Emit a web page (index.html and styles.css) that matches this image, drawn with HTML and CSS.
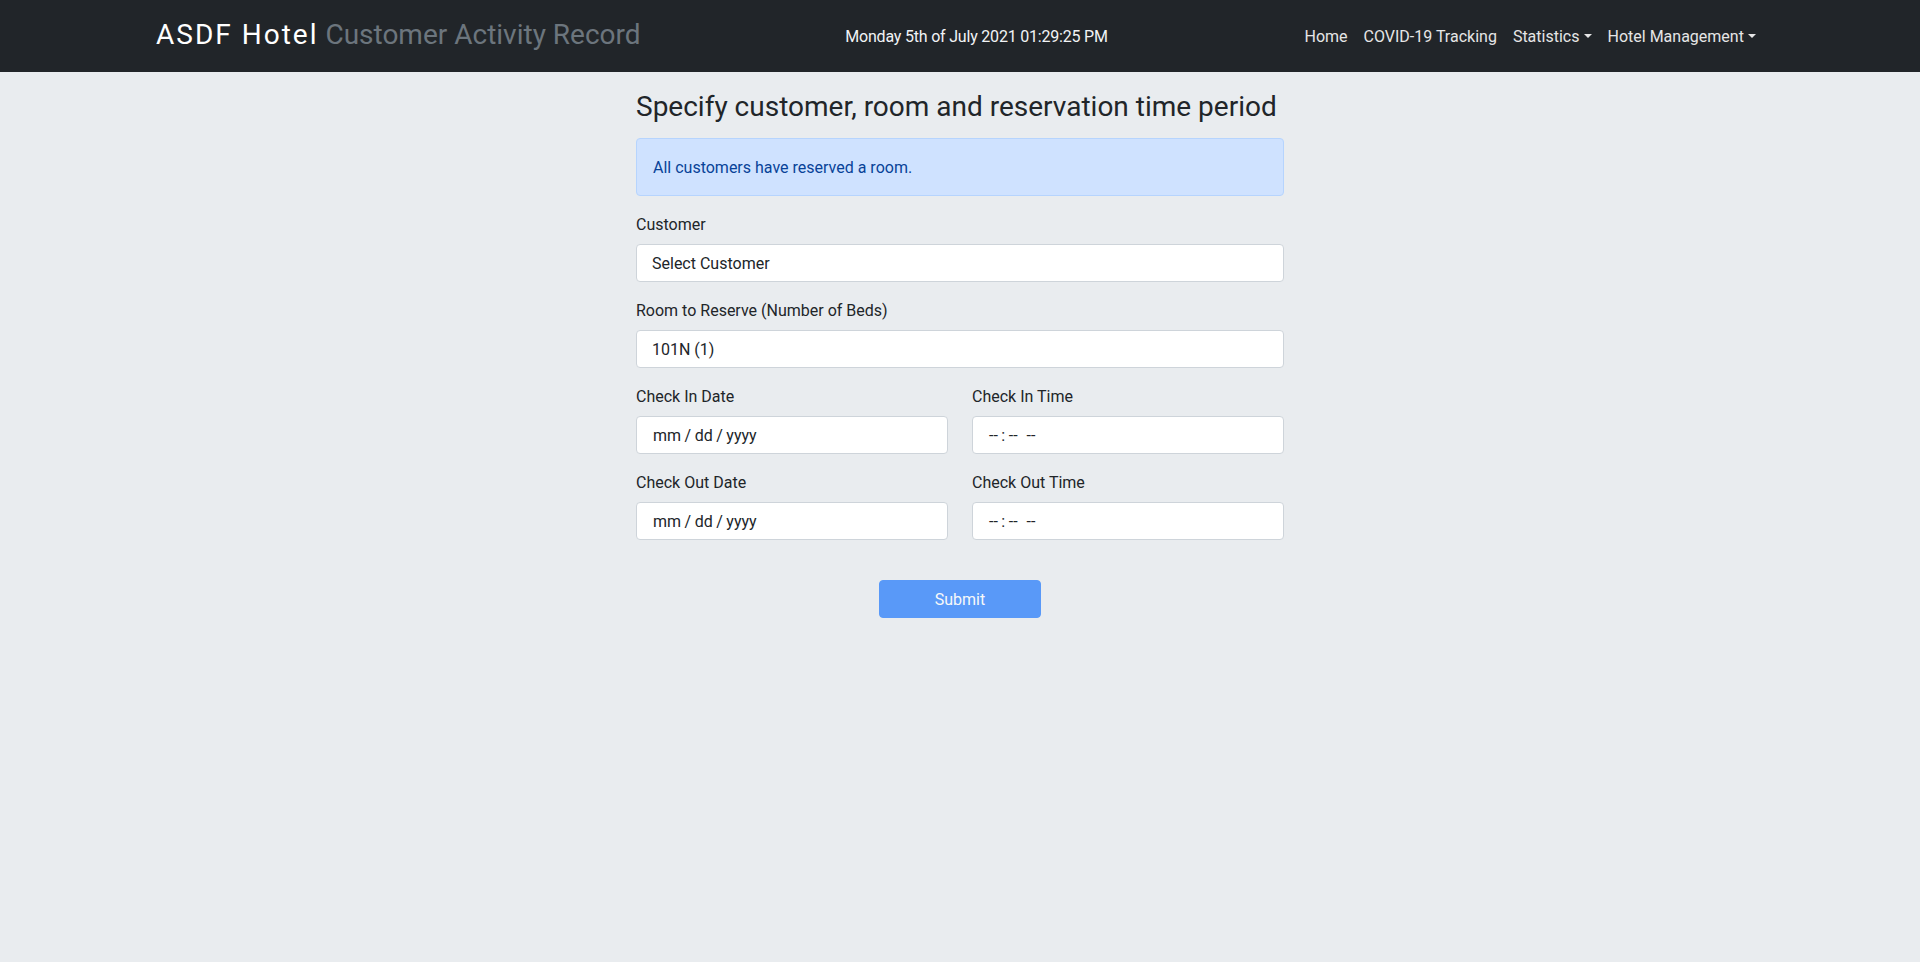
FILE: index.html
```html
<!DOCTYPE html>
<html lang="en">
<head>
<meta charset="utf-8">
<title>ASDF Hotel Customer Activity Record</title>
<link rel="stylesheet" href="styles.css">
</head>
<body>
<nav class="navbar">
  <div class="navbar-inner">
    <a class="brand" href="#"><span class="brand-main">ASDF Hotel</span> <span class="brand-sub">Customer Activity Record</span></a>
    <span class="clock">Monday 5th of July 2021 01:29:25 PM</span>
    <ul class="nav">
      <li><a class="nav-link" href="#">Home</a></li>
      <li><a class="nav-link" href="#">COVID-19 Tracking</a></li>
      <li><a class="nav-link dropdown-toggle" href="#">Statistics</a></li>
      <li><a class="nav-link dropdown-toggle" href="#">Hotel Management</a></li>
    </ul>
  </div>
</nav>

<main class="container">
  <h3 class="title">Specify customer, room and reservation time period</h3>
  <div class="alert">All customers have reserved a room.</div>
  <form class="form">
    <div class="group">
      <label class="label" for="customer">Customer</label>
      <select class="control" id="customer"><option>Select Customer</option></select>
    </div>
    <div class="group">
      <label class="label" for="room">Room to Reserve (Number of Beds)</label>
      <select class="control" id="room"><option>101N (1)</option></select>
    </div>
    <div class="row">
      <div class="group">
        <label class="label" for="cid">Check In Date</label>
        <input class="control" type="date" id="cid">
      </div>
      <div class="group">
        <label class="label" for="cit">Check In Time</label>
        <input class="control" type="time" id="cit">
      </div>
    </div>
    <div class="row">
      <div class="group">
        <label class="label" for="cod">Check Out Date</label>
        <input class="control" type="date" id="cod">
      </div>
      <div class="group">
        <label class="label" for="cot">Check Out Time</label>
        <input class="control" type="time" id="cot">
      </div>
    </div>
    <div class="actions">
      <button class="btn" type="submit" disabled>Submit</button>
    </div>
  </form>
</main>
</body>
</html>
```
FILE: styles.css
```css
* { box-sizing: border-box; }
html, body { margin: 0; padding: 0; }
body {
  font-family: Roboto, "Liberation Sans", sans-serif;
  font-size: 16px;
  line-height: 1.5;
  color: #212529;
  background: #e9ecef;
  min-height: 962px;
}
.navbar {
  background: #212529;
  height: 72px;
}
.navbar-inner {
  max-width: 1608px;
  height: 100%;
  margin: 0 auto;
  display: flex;
  align-items: center;
  justify-content: space-between;
}
.brand {
  color: #fff;
  text-decoration: none;
  font-size: 28px;
  line-height: 1.2;
  margin-right: 16px;
  margin-top: -2px;
  white-space: nowrap;
}
.brand-main { letter-spacing: 2px; }
.brand-sub { color: #6c757d; }
.clock {
  color: #f1f3f5;
  white-space: nowrap;
  letter-spacing: -0.2px;
  margin-top: 2px;
}
.nav {
  list-style: none;
  margin: 2px 0 0;
  padding: 0;
  display: flex;
}
.nav-link {
  display: block;
  padding: 0 8px;
  color: #e6e6e6;
  text-decoration: none;
  white-space: nowrap;
}
.dropdown-toggle::after {
  content: "";
  display: inline-block;
  margin-left: 0.255em;
  vertical-align: 0.255em;
  border-top: 0.3em solid;
  border-right: 0.3em solid transparent;
  border-left: 0.3em solid transparent;
  border-bottom: 0;
}
.container {
  width: 648px;
  margin: 0 auto;
  padding-top: 18px;
}
.title {
  margin: 0 0 15px;
  font-size: 28px;
  font-weight: 400;
  line-height: 33px;
  color: #212529;
  white-space: nowrap;
}
.alert {
  padding: 17px 16px 15px;
  margin-bottom: 16px;
  border: 1px solid #b6d4fe;
  border-radius: 4px;
  background: #cfe2ff;
  color: #084298;
}
.form { margin: 0; }
.group { margin-bottom: 16px; }
.label {
  display: block;
  padding-top: 1px;
  margin-bottom: 7px;
}
.control {
  display: block;
  width: 100%;
  height: 38px;
  padding: 7px 12px 5px 15px;
  font-family: inherit;
  font-size: 16px;
  line-height: 24px;
  color: #212529;
  background: #fff;
  border: 1px solid #ced4da;
  border-radius: 4px;
  -webkit-appearance: none;
  appearance: none;
  margin: 0;
}
.control::-webkit-calendar-picker-indicator { display: none; }
.control::-webkit-datetime-edit { padding: 0; }
.control::-webkit-datetime-edit-text { padding: 0 2.5px; }
.row {
  display: grid;
  grid-template-columns: 1fr 1fr;
  column-gap: 24px;
}
.actions {
  display: flex;
  justify-content: center;
  padding-top: 24px;
}
.btn {
  width: 162px;
  height: 38px;
  font-family: inherit;
  font-size: 16px;
  line-height: 24px;
  color: #fff;
  background: #0d6efd;
  border: 1px solid #0d6efd;
  border-radius: 4px;
  opacity: 0.65;
  padding: 7px 12px 5px;
}
```
